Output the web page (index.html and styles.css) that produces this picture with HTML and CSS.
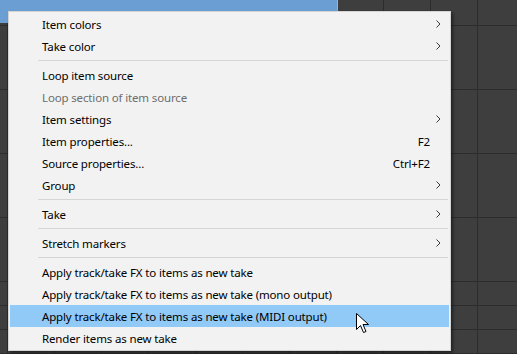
FILE: index.html
```html
<!DOCTYPE html>
<html lang="en">
<head>
    <meta charset="UTF-8">
    <title>Item context menu</title>
    <link rel="stylesheet" href="styles.css">
</head>
<body>
    <div class="arrange">
        <div class="track track-top">
            <div class="media-item"></div>
        </div>
        <div class="track track-tall"></div>
        <div class="track track-tall"></div>
        <div class="track track-tall"></div>
        <div class="track track-tall"></div>
        <div class="track track-small"></div>
        <div class="track track-small"></div>
        <div class="track"></div>

        <ul class="menu">
            <li class="item"><span class="label">Item colors</span><span class="sub"><svg width="5" height="8" viewBox="0 0 5 8"><polyline points="0.5,0.5 4,4 0.5,7.5" /></svg></span></li>
            <li class="item"><span class="label">Take color</span><span class="sub"><svg width="5" height="8" viewBox="0 0 5 8"><polyline points="0.5,0.5 4,4 0.5,7.5" /></svg></span></li>
            <li class="sep"></li>
            <li class="item"><span class="label">Loop item source</span><span class="sub"></span></li>
            <li class="item disabled"><span class="label">Loop section of item source</span><span class="sub"></span></li>
            <li class="item"><span class="label">Item settings</span><span class="sub"><svg width="5" height="8" viewBox="0 0 5 8"><polyline points="0.5,0.5 4,4 0.5,7.5" /></svg></span></li>
            <li class="item"><span class="label">Item properties...</span><span class="key">F2</span><span class="sub"></span></li>
            <li class="item"><span class="label">Source properties...</span><span class="key">Ctrl+F2</span><span class="sub"></span></li>
            <li class="item"><span class="label">Group</span><span class="sub"><svg width="5" height="8" viewBox="0 0 5 8"><polyline points="0.5,0.5 4,4 0.5,7.5" /></svg></span></li>
            <li class="sep"></li>
            <li class="item"><span class="label">Take</span><span class="sub"><svg width="5" height="8" viewBox="0 0 5 8"><polyline points="0.5,0.5 4,4 0.5,7.5" /></svg></span></li>
            <li class="sep"></li>
            <li class="item"><span class="label">Stretch markers</span><span class="sub"><svg width="5" height="8" viewBox="0 0 5 8"><polyline points="0.5,0.5 4,4 0.5,7.5" /></svg></span></li>
            <li class="sep"></li>
            <li class="item"><span class="label">Apply track/take FX to items as new take</span><span class="sub"></span></li>
            <li class="item"><span class="label">Apply track/take FX to items as new take (mono output)</span><span class="sub"></span></li>
            <li class="item hover"><span class="label">Apply track/take FX to items as new take (MIDI output)</span><span class="sub"></span></li>
            <li class="item"><span class="label">Render items as new take</span><span class="sub"></span></li>
        </ul>

        <svg class="cursor" width="13" height="21" viewBox="0 0 13 21">
            <path d="M0.5,0.5 L0.5,16.5 L4.5,12.5 L7.5,19.5 L10,18.5 L7,11.5 L12.5,11.5 Z" />
        </svg>
    </div>
</body>
</html>
```

FILE: styles.css
```css
body {
    margin: 0;
    padding: 0;
    background-color: #3e3e3e;
    font-family: "Noto Sans", "Open Sans", sans-serif;
    overflow: hidden;
}

.arrange {
    position: relative;
    width: 517px;
    height: 354px;
    overflow: hidden;
    background-color: #3e3e3e;
    background-image: linear-gradient(to right, transparent 0 46px, #2c2c2c 46px 47px);
    background-size: 47px 100%;
    background-position: 8px 0;
}

.track {
    height: 23px;
    border-bottom: 1px solid #2c2c2c;
}

.track-top {
    height: 25px;
}

.track-tall {
    height: 63px;
}

.track-small {
    height: 23px;
}

.media-item {
    width: 337px;
    height: 23px;
    background-color: #6b9fd3;
    border-right: 1px solid #8fb6df;
}

.menu {
    position: absolute;
    left: 8px;
    top: 11px;
    width: 439px;
    margin: 0;
    padding: 1px;
    list-style: none;
    background-color: #f2f2f2;
    border: 1px solid #d4d4d4;
    box-shadow: 2px 2px 3px rgba(0, 0, 0, 0.45);
    font-size: 11.5px;
    letter-spacing: -0.15px;
    color: #000;
}

.item {
    display: flex;
    align-items: center;
    height: 22px;
    padding-left: 32px;
    white-space: nowrap;
}

.item .label {
    flex: 1;
}

.item .key {
    text-align: right;
}

.item .sub {
    width: 19px;
    display: flex;
    align-items: center;
    justify-content: flex-start;
    padding-left: 6px;
    box-sizing: border-box;
}

.item .sub svg polyline {
    fill: none;
    stroke: #3a3a3a;
    stroke-width: 1;
}

.item.disabled {
    color: #6d6d6d;
}

.item.hover {
    background-color: #91c9f7;
}

.sep {
    height: 1px;
    margin: 3px 1px 3px 28px;
    background-color: #d5d5d5;
}

.cursor {
    position: absolute;
    left: 356px;
    top: 313px;
}

.cursor path {
    fill: #fff;
    stroke: #000;
    stroke-width: 1;
    stroke-linejoin: miter;
}
```
